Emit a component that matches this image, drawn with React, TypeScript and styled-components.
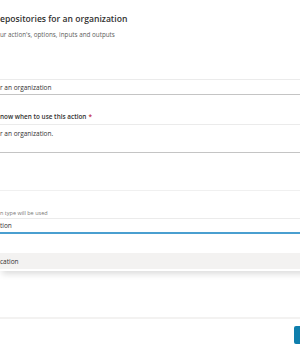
import styled, { createGlobalStyle } from "styled-components";

const GlobalStyle = createGlobalStyle`
  html, body {
    margin: 0;
    padding: 0;
    background: #ffffff;
  }
  body {
    font-family: "Open Sans", "Noto Sans", sans-serif;
    color: #323130;
  }
`;

const Page = styled.div`
  width: 300px;
  height: 350px;
  overflow: hidden;
  display: flex;
  flex-direction: column;
`;

const Panel = styled.div`
  width: 330px;
  display: flex;
  flex-direction: column;
  flex: 1;
`;

const Header = styled.div`
  padding-top: 13px;
  display: flex;
  flex-direction: column;
  gap: 6px;
`;

const Title = styled.h1`
  margin: 0;
  font-size: 8.6px;
  line-height: 12px;
  font-weight: 600;
  color: #323130;
`;

const Subtitle = styled.p`
  margin: 0;
  font-size: 6.3px;
  line-height: 8px;
  color: #605e5c;
`;

const Field = styled.div<{ $top: number }>`
  margin-top: ${(p) => p.$top}px;
  display: flex;
  flex-direction: column;
`;

const Label = styled.label`
  font-size: 6.4px;
  line-height: 8px;
  font-weight: 600;
  color: #323130;
  margin-bottom: 3px;
`;

const Required = styled.span`
  color: #c4314b;
  margin-left: 2px;
`;

const Hint = styled.span`
  font-size: 5.5px;
  line-height: 7px;
  color: #7a7876;
  margin-bottom: 1px;
`;

const TextInput = styled.input<{ $focused?: boolean }>`
  box-sizing: border-box;
  width: 100%;
  height: 16px;
  margin: 0;
  padding: 0;
  border: none;
  border-top: 1px solid #ebebeb;
  border-bottom: ${(p) => (p.$focused ? "2px solid #4a9fd0" : "1px solid #c4c4c4")};
  font-family: inherit;
  font-size: 6.5px;
  color: #323130;
  background: #ffffff;
  outline: none;
`;

const TextArea = styled.textarea`
  box-sizing: border-box;
  width: 100%;
  height: 29px;
  margin: 0;
  padding: 5px 0 0 0;
  border: none;
  border-top: 1px solid #ebebeb;
  border-bottom: 1px solid #c4c4c4;
  font-family: inherit;
  font-size: 6.5px;
  line-height: 8px;
  color: #323130;
  resize: none;
  outline: none;
`;

const Divider = styled.div<{ $top: number }>`
  margin-top: ${(p) => p.$top}px;
  height: 1px;
  background: #f0f0f0;
`;

const Menu = styled.div`
  margin-top: 15px;
  padding: 4px 0 2px;
  background: #ffffff;
  box-shadow: 0 5px 6px -2px rgba(0, 0, 0, 0.14);
`;

const Option = styled.div<{ $hover?: boolean }>`
  height: 16px;
  display: flex;
  align-items: center;
  font-size: 6.5px;
  color: #323130;
  background: ${(p) => (p.$hover ? "#f3f2f1" : "#ffffff")};
`;

const Footer = styled.div`
  margin-top: auto;
  border-top: 2px solid #f3f2f1;
  padding: 7px 0 6px;
  display: flex;
  justify-content: flex-end;
`;

const PrimaryButton = styled.button`
  width: 36px;
  height: 18px;
  padding: 0;
  border: none;
  border-radius: 2px;
  background: #0f7fad;
`;

export default function App(): JSX.Element {
  return (
    <Page>
      <GlobalStyle />
      <Panel>
        <Header>
          <Title>epositories for an organization</Title>
          <Subtitle>ur action's, options, inputs and outputs</Subtitle>
        </Header>

        <Field $top={40}>
          <TextInput defaultValue="r an organization" />
        </Field>

        <Field $top={18}>
          <Label>
            now when to use this action<Required>*</Required>
          </Label>
          <TextArea defaultValue="r an organization." />
        </Field>

        <Divider $top={37} />

        <Field $top={19}>
          <Hint>n type will be used</Hint>
          <TextInput $focused defaultValue="tion" />
        </Field>

        <Menu>
          <Option $hover>cation</Option>
        </Menu>

        <Footer>
          <PrimaryButton aria-label="Save" />
        </Footer>
      </Panel>
    </Page>
  );
}
